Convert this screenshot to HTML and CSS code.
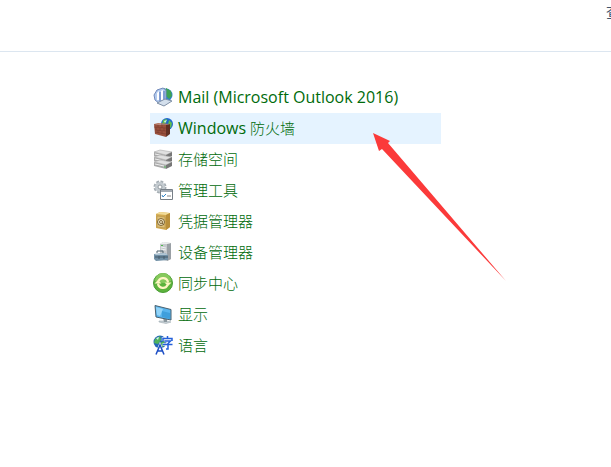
FILE: index.html
```
<!DOCTYPE html>
<html lang="zh-CN">
<head>
  <meta charset="UTF-8" />
  <title>控制面板</title>
  <link rel="stylesheet" href="styles.css">
</head>
<body>

  <header class="toolbar"><span class="view-label">查</span></header>

  <main class="panel">
    <nav class="items">
      <a class="item" href="#">
        <svg class="icon" viewBox="0 0 20 20">
          <circle cx="13" cy="8" r="6.500" fill="#2f7fd0"/>
          <path d="M13 1l5 3 1 5-3 3-3-3zM8 3l4-2-1 5z" fill="#3fa355"/>
          <path d="M1 8l3-5 6-2 3 2v12l-6 2-5-4z" fill="#b3cbee" stroke="#7189bb"/>
          <path d="M4 6l2-2v9H4zM8 4l2-1v10H8z" fill="#fff"/>
          <path d="M7 5v9M11 4v10" stroke="#4f70b8"/>
          <path d="M4 16l8-4 7 2-8 5z" fill="#d3dfec" stroke="#7f90a6"/>
        </svg>
        <span class="latin">Mail (Microsoft Outlook 2016)</span>
      </a>
      <a class="item active" href="#">
        <svg class="icon" viewBox="0 0 20 20">
          <circle cx="14" cy="6" r="6" fill="#1f68cc"/>
          <path d="M10 2l4-1-1 4-4 2zM16 2l3 3-1 5-3-3z" fill="#5fbd4e"/>
          <path d="M11 3l3-1-2 3z" fill="#d3f2f5"/>
          <path d="M1 6l12 1v12L2 16z" fill="#99503d"/>
          <path d="M13 7l4-1v10l-4 3z" fill="#613024"/>
          <path d="M1 6l4-1 12 1-4 1z" fill="#b77762"/>
          <path d="M1 9l12 1M2 12l11 1M2 14l11 2M5 7v2M9 7v3M3 9v3M7 10v3M11 10v3M5 12v3M9 13v3" stroke="#793a2d" stroke-width=".6"/>
        </svg>
        <span><span class="latin">Windows</span> 防火墙</span>
      </a>
      <a class="item" href="#">
        <svg class="icon" viewBox="0 0 20 20">
          <g id="disk">
            <path d="M1 3l6-2 12 2-6 3z" fill="#e0e0e0" stroke="#aaa" stroke-width=".6"/>
            <path d="M1 3l12 3v4L1 7z" fill="#aaa"/>
            <path d="M13 6l6-3v4l-6 3z" fill="#777"/>
            <path d="M2 5l9 2" stroke="#eee"/>
            <path d="M12 7v2" stroke="#51bd58"/>
          </g>
          <use href="#disk" y="5"/>
          <use href="#disk" y="10"/>
        </svg>
        <span>存储空间</span>
      </a>
      <a class="item" href="#">
        <svg class="icon" viewBox="0 0 20 20">
          <circle cx="7" cy="7" r="5" fill="#d5dade" stroke="#a5adb3" stroke-width="3" stroke-dasharray="2.600 1.300"/>
          <circle cx="7" cy="7" r="5" fill="#c4cbd0"/>
          <circle cx="7" cy="7" r="2" fill="#fff" stroke="#929ba1"/>
          <path d="M7.500 9.500h12v10h-12z" fill="#fff" stroke="#777f87"/>
          <path d="M8 10h11v2H8z" fill="#a3abb3"/>
          <path d="M9 15l1 2 3-3" fill="none" stroke="#3486c8"/>
          <path d="M14 16h4" stroke="#888"/>
        </svg>
        <span>管理工具</span>
      </a>
      <a class="item" href="#">
        <svg class="icon" viewBox="0 0 20 20">
          <path d="M3 3l4-2 10 1v14l-4 3-10-2z" fill="#d2aa52"/>
          <path d="M3 3l4-2 10 1-4 2z" fill="#f2dc98"/>
          <path d="M13 4l4-2v14l-4 3z" fill="#b98f3a"/>
          <path d="M4 5l8 1v11l-8-1z" fill="#dfc078" stroke="#b8954c" stroke-width=".7"/>
          <circle cx="8" cy="11" r="3.500" fill="#eee2bd" stroke="#7d6638"/>
          <circle cx="8" cy="11" r="1.500" fill="none" stroke="#80683a"/>
          <path d="M9 12l2 2" stroke="#80683a"/>
        </svg>
        <span>凭据管理器</span>
      </a>
      <a class="item" href="#">
        <svg class="icon" viewBox="0 0 20 20">
          <path d="M7 2l3-2 8 1v16l-4 2-7-2z" fill="#c4c8cb"/>
          <path d="M14 2l4-1v16l-4 2z" fill="#9aa0a5"/>
          <path d="M7 2l3-2 8 1-4 1z" fill="#eceeee"/>
          <path d="M8 5l5 1M8 7l5 1" stroke="#edf0f1"/>
          <path d="M8 3.500h2" stroke="#4cba4b"/>
          <path d="M4 11V9h6v3" fill="none" stroke="#4f626e"/>
          <path d="M1 12l11-1 3 2v5l-12 1-2-2z" fill="#7190a6"/>
          <path d="M1 12l11-1 3 2H3z" fill="#b2c7d5"/>
          <path d="M2 15h13M6 14v3M11 14v3" stroke="#455a69"/>
        </svg>
        <span>设备管理器</span>
      </a>
      <a class="item" href="#">
        <svg class="icon" viewBox="0 0 20 20">
          <circle cx="10" cy="10" r="9.500" fill="#5cb33c" stroke="#4a9c35"/>
          <path d="M2 8a8 8 0 0 1 16 0q-7 4-16 0z" fill="#86c95c"/>
          <path d="M5.500 8a5 5 0 0 1 9.500 1.500M14.500 12a5 5 0 0 1-9.500-1.500" fill="none" stroke="#fff6c4" stroke-width="2.200"/>
          <path d="M11.500 9.500h7L15 13zM1.500 10.500L5 7l3.500 3.500z" fill="#fff6c4"/>
        </svg>
        <span>同步中心</span>
      </a>
      <a class="item" href="#">
        <svg class="icon" viewBox="0 0 20 20">
          <path d="M6 17l8 0 4 1-5 1.500-7-1.500z" fill="#c7d0d6" stroke="#a0abb2" stroke-width=".6"/>
          <path d="M10 14l4 1v3h-3z" fill="#8c989f"/>
          <path d="M2 1.500l16 4v10.500l-15-3z" fill="#58b4ee" stroke="#49616f"/>
          <path d="M3 3l7 2-3 7-3-1z" fill="#93d4f8"/>
          <path d="M9 7l8 2v6l-8-2z" fill="#3f9fdc"/>
        </svg>
        <span>显示</span>
      </a>
      <a class="item" href="#">
        <svg class="icon" viewBox="0 0 20 20">
          <circle cx="7" cy="7" r="6.500" fill="#2468b8"/>
          <path d="M2 4l5-3 1 4-3 4-4-1zM7 8l4-2 1 4-4 3z" fill="#4fb35c"/>
          <path d="M3 3l3-1-1 3z" fill="#d3f1ed"/>
          <path d="M3 19.500L7 10l4 9.500M4.500 16h5" fill="none" stroke="#fff" stroke-width="2.500"/>
          <path d="M3 19.500L7 10l4 9.500M4.500 16h5" fill="none" stroke="#1c4ec5" stroke-width="1.500"/>
          <path d="M14.500 1v2M10 6V3.500h9V6M11.500 6h6L15 8.500V14h-2M9.500 9.500h10" fill="none" stroke="#fff" stroke-width="2.500"/>
          <path d="M14.500 1v2M10 6V3.500h9V6M11.500 6h6L15 8.500V14h-2M9.500 9.500h10" fill="none" stroke="#2460da" stroke-width="1.500"/>
        </svg>
        <span>语言</span>
      </a>
    </nav>

    <svg class="arrow" viewBox="0 0 133 148">
      <path d="M0 0l17 8-2 2 118 138L9 16l-3 2z" fill="#fb3a3a"/>
    </svg>
  </main>

</body>
</html>
```
FILE: styles.css
```
body {
  margin: 0;
  background: #fff;
  font-family: "Open Sans", "Noto Sans CJK SC", sans-serif;
  font-size: 15px;
}
.toolbar {
  height: 51px;
  border-bottom: 1px solid #dce6f0;
  display: flex;
  justify-content: flex-end;
  overflow: hidden;
}
.view-label {
  margin-right: -10px;
  line-height: 24px;
  color: #42546c;
}
.panel {
  position: relative;
  padding: 30px 170px 0 150px;
}
.items {
  display: flex;
  flex-direction: column;
}
.item {
  display: flex;
  align-items: center;
  gap: 5px;
  box-sizing: border-box;
  height: 31px;
  padding: 0 0 2px 3px;
  color: #006b0b;
  font-weight: 300;
  text-decoration: none;
  white-space: nowrap;
}
.item:hover,
.item.active {
  background: #e5f3ff;
}
.latin {
  font-size: 16px;
  font-weight: 400;
}
.icon {
  width: 20px;
  height: 20px;
  flex: none;
}
.arrow {
  position: absolute;
  left: 373px;
  top: 81px;
  width: 133px;
  height: 148px;
  pointer-events: none;
}
```
